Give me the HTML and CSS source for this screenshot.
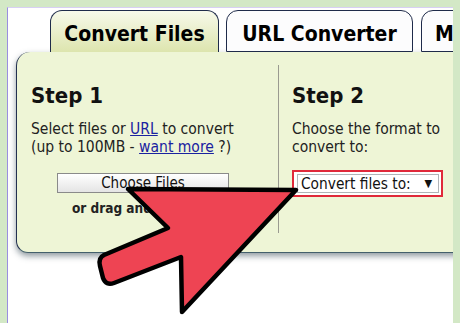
FILE: index.html
```html
<!DOCTYPE html>
<html>
<head>
<meta charset="utf-8">
<link rel="stylesheet" href="styles.css">
</head>
<body>
<div class="frame">
  <div class="tabs">
    <div class="tab active">Convert Files</div>
    <div class="tab">URL Converter</div>
    <div class="tab last">M</div>
  </div>
  <div class="panel">
    <div class="col col1">
      <h2 class="step">Step 1</h2>
      <p class="desc">Select files or <a href="#">URL</a> to convert<br>(up to 100MB - <a href="#">want more</a> ?)</p>
      <div class="btn">Choose Files</div>
      <div class="drag">or drag and drop files</div>
    </div>
    <div class="divider"></div>
    <div class="col col2">
      <h2 class="step">Step 2</h2>
      <p class="desc">Choose the format to<br>convert to:</p>
      <div class="selwrap"><div class="sel"><span>Convert files to:</span><span class="caret">&#9660;</span></div></div>
    </div>
  </div>
</div>
<svg class="arrow" width="460" height="323" viewBox="0 0 460 323">
  <path d="M296 190 L128 189 L168 228 L104 255 Q98 258 100 266 L103 278 Q106 286 114 283 L181 257 L182 312 Z" fill="#ee4453" stroke="#000" stroke-width="4.5" stroke-linejoin="round"/>
</svg>
</body>
</html>
```
FILE: styles.css
```css
html, body { margin: 0; padding: 0; }
body {
  background: #d3e8c6;
  width: 460px;
  height: 323px;
  overflow: hidden;
  position: relative;
  font-family: "DejaVu Sans Condensed", "DejaVu Sans", sans-serif;
}
.frame {
  position: absolute;
  left: 7px; top: 7px; right: 7px; bottom: 0;
  background: #fff;
  border-left: 1px solid #9a8ee0;
  border-top: 1px solid #d8d0f4;
  padding: 2px 0 0 8px;
  overflow: hidden;
}
.tabs {
  display: flex;
  margin-left: 34px;
  height: 42px;
  gap: 7px;
}
.tab {
  flex-shrink: 0;
  box-sizing: border-box;
  height: 42px;
  border: 1.5px solid #1f2b4a;
  border-radius: 12px 12px 0 0;
  background: #fcfcfd;
  font-weight: bold;
  font-size: 21px;
  color: #000;
  display: flex;
  align-items: center;
  padding: 5px 13px 0 13px;
  white-space: nowrap;
}
.tab.active {
  width: 169px;
  border-bottom: none;
  background: linear-gradient(#f7f9ea, #dde5ae);
  justify-content: center;
  padding-left: 0;
  padding-right: 0;
}
.tab:nth-child(2) { width: 187px; justify-content: center; padding-left: 0; padding-right: 0; }
.tab.last { width: 60px; margin-left: 1px; }
.panel {
  display: flex;
  width: 460px;
  height: 201px;
  background: #eef5d6;
  border-radius: 14px 0 0 12px;
  border-left: 1.5px solid #223050;
  border-bottom: 1px solid #44606c;
  box-shadow: 0 3px 6px 0 rgba(50, 70, 80, 0.55);
  box-sizing: border-box;
}
.col1 { width: 261px; padding-left: 14px; box-sizing: border-box; flex-shrink: 0; }
.col2 { padding-left: 13px; }
.divider {
  flex-shrink: 0;
  width: 1px;
  background: #9a9a90;
  margin-top: 13px;
  height: 168px;
}
.step {
  margin: 31px 0 0 0;
  font-size: 22px;
  line-height: 26px;
  font-weight: bold;
  color: #111;
}
.desc {
  margin: 11px 0 0 0;
  font-size: 15.5px;
  line-height: 18px;
  color: #222;
  white-space: nowrap;
}
.desc a { color: #1a22a0; text-decoration: underline; }
.btn {
  margin: 17px 0 0 26px;
  width: 172px;
  height: 20px;
  box-sizing: border-box;
  border: 1px solid #8a8a8a;
  background: linear-gradient(#ffffff, #e4e4e4);
  font-size: 15px;
  line-height: 18px;
  text-align: center;
  color: #111;
}
.drag {
  margin: 7px 0 0 41px;
  font-size: 13.5px;
  line-height: 16px;
  font-weight: bold;
  color: #222;
  white-space: nowrap;
}
.selwrap {
  margin-top: 14px;
  width: 151px;
  height: 27px;
  box-sizing: border-box;
  border: 2px solid #e0293a;
  background: #fff;
  padding: 2px 2px 2px 3px;
}
.sel {
  height: 19px;
  box-sizing: border-box;
  border: 1px solid #b0b4b8;
  display: flex;
  justify-content: space-between;
  align-items: center;
  font-size: 15.3px;
  color: #111;
  padding: 0 6px 0 3px;
  white-space: nowrap;
}
.caret { font-size: 11px; }
.arrow {
  position: absolute;
  left: 0; top: 0;
}
```
